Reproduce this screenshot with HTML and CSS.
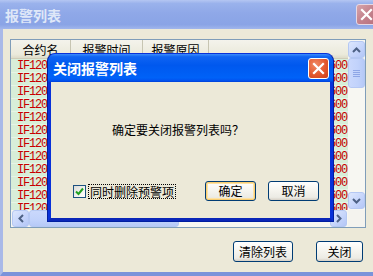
FILE: index.html
```html
<!DOCTYPE html>
<html lang="zh">
<head>
<meta charset="utf-8">
<title>报警列表</title>
<link rel="stylesheet" href="styles.css">
</head>
<body>
<div class="win">
  <div class="win-title">
    <span class="win-caption">报警列表</span>
    <span class="xbtn xbtn-inactive"><svg width="13" height="13" viewBox="0 0 13 13"><path d="M2 2L11 11M11 2L2 11" stroke="#fff" stroke-width="2.2" stroke-linecap="square"/></svg></span>
  </div>
  <div class="win-body">
    <div class="list">
      <div class="list-top">
        <div class="list-view">
          <div class="list-head">
            <div class="th c1">合约名</div>
            <div class="th c2">报警时间</div>
            <div class="th c3">报警原因</div>
            <div class="th c4"></div>
          </div>
          <div class="rows">
            <div class="row"><span>IF1206</span><span>2600</span></div>
            <div class="row"><span>IF1206</span><span>2600</span></div>
            <div class="row"><span>IF1206</span><span>2600</span></div>
            <div class="row"><span>IF1206</span><span>2600</span></div>
            <div class="row"><span>IF1206</span><span>2600</span></div>
            <div class="row"><span>IF1206</span><span>2600</span></div>
            <div class="row"><span>IF1206</span><span>2600</span></div>
            <div class="row"><span>IF1206</span><span>2600</span></div>
            <div class="row"><span>IF1206</span><span>2600</span></div>
            <div class="row"><span>IF1206</span><span>2600</span></div>
            <div class="row"><span>IF1206</span><span>2600</span></div>
            <div class="row"><span>IF1206</span><span>2600</span></div>
          </div>
        </div>
        <div class="vscroll">
          <span class="sbtn"><svg width="9" height="6" viewBox="0 0 9 6"><path d="M1 5L4.5 1.5L8 5" fill="none" stroke="#4d6185" stroke-width="2"/></svg></span>
          <span class="vthumb"><i></i><i></i><i></i><i></i></span>
          <span class="vtrack"></span>
          <span class="sbtn"><svg width="9" height="6" viewBox="0 0 9 6"><path d="M1 1L4.5 4.5L8 1" fill="none" stroke="#4d6185" stroke-width="2"/></svg></span>
        </div>
      </div>
      <div class="list-bottom">
        <div class="hscroll">
          <span class="sbtn"><svg width="6" height="9" viewBox="0 0 6 9"><path d="M5 1L1.5 4.5L5 8" fill="none" stroke="#4d6185" stroke-width="2"/></svg></span>
          <span class="hthumb"></span>
          <span class="htrack"></span>
          <span class="sbtn"><svg width="6" height="9" viewBox="0 0 6 9"><path d="M1 1L4.5 4.5L1 8" fill="none" stroke="#4d6185" stroke-width="2"/></svg></span>
        </div>
        <div class="corner"></div>
      </div>
    </div>
    <div class="actions">
      <button class="btn btn-wide">清除列表</button>
      <button class="btn">关闭</button>
    </div>
  </div>
</div>

<div class="dlg">
  <div class="dlg-title">
    <span class="dlg-caption">关闭报警列表</span>
    <span class="xbtn xbtn-active"><svg width="13" height="13" viewBox="0 0 13 13"><path d="M2 2L11 11M11 2L2 11" stroke="#fff" stroke-width="2.2" stroke-linecap="square"/></svg></span>
  </div>
  <div class="dlg-body">
    <p class="dlg-msg">确定要关闭报警列表吗？</p>
    <div class="dlg-row">
      <label class="chk">
        <span class="chk-box"><svg width="9" height="9" viewBox="0 0 9 9"><path d="M1 4.5L3.5 7L8 1.5" fill="none" stroke="#21a121" stroke-width="2"/></svg></span>
        <span class="chk-label">同时删除预警项</span>
      </label>
      <button class="btn btn-dlg btn-default">确定</button>
      <button class="btn btn-dlg">取消</button>
    </div>
  </div>
</div>
</body>
</html>
```
FILE: styles.css
```css
* { box-sizing: border-box; margin: 0; padding: 0; }
html, body { width: 373px; height: 276px; overflow: hidden; }
body {
  position: relative;
  background: #ece9d8;
  font-family: "Noto Sans CJK SC", "Noto Sans", sans-serif;
  font-size: 12px;
  color: #000;
}

/* outer (inactive) window */
.win {
  width: 382px;
  height: 276px;
  display: flex;
  flex-direction: column;
}
.win-title {
  height: 29px;
  flex: none;
  display: flex;
  align-items: center;
  justify-content: space-between;
  padding: 0 5px 0 5px;
  background: linear-gradient(to bottom, #b4c6f2 0%, #9ab2ec 12%, #8fa8e8 45%, #8aa4e6 85%, #a1b6ec 100%);
}
.win-caption {
  color: #dfe7f8;
  font-weight: bold;
  font-size: 14px;
}
.xbtn {
  width: 21px;
  height: 21px;
  border-radius: 3px;
  display: flex;
  align-items: center;
  justify-content: center;
  border: 1px solid #fff;
}
.xbtn-inactive {
  background: linear-gradient(135deg, #d6a5ab 0%, #c4828d 50%, #b9727f 100%);
  border-color: #e6d8e4;
}
.xbtn-active {
  background: radial-gradient(circle at 35% 30%, #f08a66 0%, #e3582e 55%, #c9401b 100%);
}
.win-body {
  flex: 1;
  display: flex;
  flex-direction: column;
  background: #ece9d8;
  border-left: 3px solid #a9b9e8;
  border-right: 4px solid #a9b9e8;
  border-bottom: 4px solid #7b93da;
  padding: 10px 12px 0 7px;
}

/* list view */
.list {
  height: 189px;
  border: 1px solid #7f9db9;
  background: #fff;
  display: flex;
  flex-direction: column;
}
.list-top { flex: 1; display: flex; min-height: 0; }
.list-view { flex: 1; overflow: hidden; background: #d9eed9; }
.list-head {
  height: 19px;
  display: flex;
  background: linear-gradient(to bottom, #f4f3ec 0%, #ebeadb 80%, #dedcc9 100%);
  border-bottom: 1px solid #d0cdb8;
}
.th {
  text-align: center;
  line-height: 19px;
  border-right: 1px solid #c7c5b2;
  white-space: nowrap;
  flex: none;
}
.c1 { width: 60px; }
.c2 { width: 72px; }
.c3 { width: 66px; }
.c4 { flex: 1; border-right: 0; }
.rows { padding-top: 1px; }
.row {
  height: 13px;
  display: flex;
  justify-content: space-between;
  padding: 0 1px 0 6px;
  font-family: "Liberation Mono", monospace;
  font-size: 12px;
  line-height: 13px;
  letter-spacing: -1.2px;
  color: #c80000;
  background: #d8eed8;
  border-bottom: 1px solid #e6f4e6;
}

/* scrollbars */
.vscroll {
  width: 17px;
  flex: none;
  display: flex;
  flex-direction: column;
  background: #f7f7f2;
  padding: 1px 0;
}
.sbtn {
  width: 17px;
  height: 17px;
  flex: none;
  display: flex;
  align-items: center;
  justify-content: center;
  border: 1px solid #b5c8f3;
  border-radius: 3px;
  background: linear-gradient(135deg, #dde7fd 0%, #c6d5fb 55%, #b3c6f6 100%);
}
.vthumb {
  height: 30px;
  flex: none;
  display: flex;
  flex-direction: column;
  align-items: center;
  justify-content: center;
  gap: 1px;
  border: 1px solid #b5c8f3;
  border-radius: 3px;
  background: linear-gradient(to right, #cad8fc 0%, #c1d2fb 60%, #b6c9f7 100%);
}
.vthumb i {
  display: block;
  width: 7px;
  height: 1px;
  background: #8ea6e6;
}
.vtrack { flex: 1; }
.list-bottom { height: 17px; flex: none; display: flex; }
.hscroll {
  flex: 1;
  display: flex;
  background: #f7f7f2;
  padding: 0 1px;
}
.hthumb {
  width: 150px;
  flex: none;
  border: 1px solid #b5c8f3;
  border-radius: 3px;
  background: linear-gradient(to bottom, #cad8fc 0%, #c1d2fb 60%, #b6c9f7 100%);
}
.htrack { flex: 1; }
.corner { width: 17px; flex: none; background: #f4f3ee; }

/* buttons */
.actions {
  display: flex;
  justify-content: flex-end;
  gap: 23px;
  margin-top: 13px;
  padding-right: 3px;
}
.btn {
  height: 21px;
  width: 47px;
  padding: 0;
  font-family: "Noto Sans CJK SC", "Noto Sans", sans-serif;
  font-size: 12px;
  line-height: 1;
  color: #000;
  border: 1px solid #003c74;
  border-radius: 3px;
  background: linear-gradient(to bottom, #ffffff 0%, #f7f6f1 40%, #ecebe4 85%, #d6d0c5 100%);
}
.btn-wide { width: 60px; }

/* dialog (active window, floating over the list) */
.dlg {
  position: absolute;
  left: 47px;
  top: 53px;
  width: 287px;
  height: 169px;
  display: flex;
  flex-direction: column;
  border-radius: 8px 8px 0 0;
  overflow: hidden;
  background: #0831d9;
  border: 1px solid #001ea0;
  border-top-color: #0831d9;
}
.dlg-title {
  height: 28px;
  flex: none;
  display: flex;
  align-items: center;
  justify-content: space-between;
  padding: 0 4px 0 5px;
  background: linear-gradient(to bottom, #3a8cfc 0%, #0f64f2 10%, #0058ee 40%, #0062f8 85%, #0154f0 94%, #0040d8 100%);
}
.dlg-caption {
  color: #fff;
  font-weight: bold;
  font-size: 14px;
}
.dlg-body {
  flex: 1;
  background: #ece9d8;
  border-left: 3px solid #0831d9;
  border-right: 3px solid #0831d9;
  border-bottom: 3px solid #0a26b8;
  display: flex;
  flex-direction: column;
  padding: 40px 0 0 22px;
}
.dlg-msg {
  line-height: 16px;
  padding-left: 39px;
}
.dlg-row {
  display: flex;
  align-items: center;
  margin-top: 43px;
}
.chk { display: flex; align-items: center; gap: 3px; }
.chk-box {
  width: 13px;
  height: 13px;
  border: 1px solid #1c5180;
  background: linear-gradient(135deg, #dcdcd7 0%, #f4f4f0 60%, #fff 100%);
  display: flex;
  align-items: center;
  justify-content: center;
}
.chk-label {
  outline: 1px dotted #000;
  line-height: 13px;
  padding: 0 1px;
}
.btn-dlg { width: 51px; height: 20px; margin-left: 12px; }
.btn-default {
  margin-left: 30px;
  box-shadow: inset 0 0 0 1px #f8cd73, inset 0 0 0 2px #fde3a6;
}
```
